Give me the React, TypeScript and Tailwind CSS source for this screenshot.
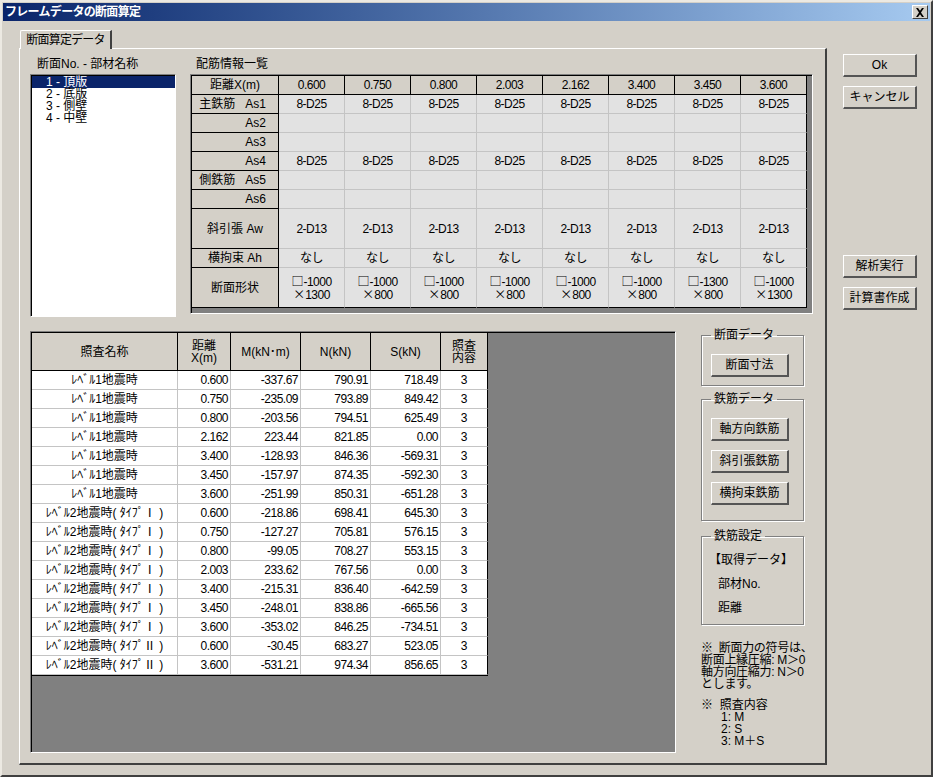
const FONT = "[font-family:'Liberation_Sans','Noto_Sans_CJK_JP',sans-serif]";

const dists = ["0.600", "0.750", "0.800", "2.003", "2.162", "3.400", "3.450", "3.600"];
const shapes = [
  ["1000", "1300"], ["1000", "800"], ["1000", "800"], ["1000", "800"],
  ["1000", "800"], ["1000", "800"], ["1300", "800"], ["1000", "1300"],
];

const L1 = "ﾚﾍﾞﾙ1地震時";
const L2 = "ﾚﾍﾞﾙ2地震時( ﾀｲﾌﾟⅠ )";
const L3 = "ﾚﾍﾞﾙ2地震時( ﾀｲﾌﾟⅡ )";
const rows = [
  [L1, "0.600", "-337.67", "790.91", "718.49"],
  [L1, "0.750", "-235.09", "793.89", "849.42"],
  [L1, "0.800", "-203.56", "794.51", "625.49"],
  [L1, "2.162", "223.44", "821.85", "0.00"],
  [L1, "3.400", "-128.93", "846.36", "-569.31"],
  [L1, "3.450", "-157.97", "874.35", "-592.30"],
  [L1, "3.600", "-251.99", "850.31", "-651.28"],
  [L2, "0.600", "-218.86", "698.41", "645.30"],
  [L2, "0.750", "-127.27", "705.81", "576.15"],
  [L2, "0.800", "-99.05", "708.27", "553.15"],
  [L2, "2.003", "233.62", "767.56", "0.00"],
  [L2, "3.400", "-215.31", "836.40", "-642.59"],
  [L2, "3.450", "-248.01", "838.86", "-665.56"],
  [L2, "3.600", "-353.02", "846.25", "-734.51"],
  [L3, "0.600", "-30.45", "683.27", "523.05"],
  [L3, "3.600", "-531.21", "974.34", "856.65"],
];

const SUNKEN = "border border-t-[#808080] border-l-[#808080] border-r-white border-b-white pt-[1px] pl-[1px] shadow-[inset_1px_1px_0_#000]";

function Btn({ label, w }: { label: string; w: string }) {
  return (
    <button className={`${w} h-[23px] flex items-center justify-center bg-[#d4d0c8] text-[12px] leading-none text-black font-normal border-t border-l border-t-white border-l-white border-r-2 border-b-2 border-r-[#555] border-b-[#555]`}>
      {label}
    </button>
  );
}

function Head({ children, className = "" }: { children: React.ReactNode; className?: string }) {
  return (
    <div className={`flex items-center bg-[#d4d0c8] border-r border-b border-black text-[12px] leading-[12px] whitespace-pre ${className}`}>
      {children}
    </div>
  );
}

function Cell({ children, last, bottom }: { children?: React.ReactNode; last?: boolean; bottom?: boolean }) {
  return (
    <div className={`flex items-center justify-center text-center bg-[#e2e2e2] border-r border-b ${last ? "border-r-black" : "border-r-[#c4c4c4]"} ${bottom ? "border-b-black" : "border-b-[#c4c4c4]"} text-[12px] leading-[12px] tracking-[-0.5px]`}>
      {children}
    </div>
  );
}

function DataRow({ title, justify = "justify-center", pr = "", bottom, value }: { title: string; justify?: string; pr?: string; bottom?: boolean; value: (i: number) => React.ReactNode }) {
  return (
    <>
      <Head className={`${justify} ${pr}`}>{title}</Head>
      {dists.map((_, i) => (
        <Cell key={i} last={i === 7} bottom={bottom}>{value(i)}</Cell>
      ))}
    </>
  );
}

function Group({ title, h, children }: { title: string; h: string; children: React.ReactNode }) {
  return (
    <fieldset className={`${h} w-[103px] border border-[#808080] shadow-[1px_1px_0_#fff,inset_1px_1px_0_#fff] px-[9px]`}>
      <legend className="px-[3px] text-[12px] leading-[12px]">{title}</legend>
      {children}
    </fieldset>
  );
}

export default function App() {
  return (
    <div className={`w-[933px] h-[777px] flex flex-col overflow-hidden bg-[#d4d0c8] text-black border-t-2 border-l-2 border-t-[#ece9e2] border-l-[#ece9e2] border-r-2 border-b-2 border-r-[#404040] border-b-[#404040] p-[1px] ${FONT}`}>
      <div className="h-[18px] shrink-0 flex items-center justify-between bg-gradient-to-r from-[#0a246a] to-[#a6caf0] pl-[2px] pr-[2px]">
        <span className="text-white font-bold text-[12px] tracking-[-0.7px] leading-none">フレームデータの断面算定</span>
        <span className="w-[16px] h-[14px] flex items-center justify-center bg-[#d4d0c8] border-t border-l border-t-white border-l-white border-r border-b border-r-[#404040] border-b-[#404040]">
          <svg width="10" height="9" viewBox="0 0 10 9"><path d="M1 0h2l2 2.7L7 0h2L6 4.5 9 9H7L5 6.3 3 9H1l3-4.5z" fill="#000" /></svg>
        </span>
      </div>

      <div className="flex flex-1 min-h-0 pl-[16px] pt-[9px]">
        <div className="w-[808px] shrink-0 flex flex-col">
          <div className="h-[18px] flex pl-[1px]">
            <div className="w-[92px] h-[19px] z-10 flex items-center justify-center bg-[#d4d0c8] rounded-tl-[2px] border-t border-l border-t-white border-l-white border-r-2 border-r-[#404040] text-[12px] tracking-[-0.8px] leading-none">
              断面算定データ
            </div>
          </div>
          <div className="h-[717px] border-t border-l border-t-white border-l-white border-r-2 border-b-2 border-r-[#404040] border-b-[#404040] pl-[10px]">
            <div className="flex pt-[8px] h-[282px]">
              <div className="w-[146px] shrink-0 flex flex-col">
                <div className="h-[17px] pl-[7px] text-[12px] leading-[14px]">断面No. - 部材名称</div>
                <div className={`h-[243px] bg-white ${SUNKEN} text-[12px] leading-[12px]`}>
                  {["1 - 頂版", "2 - 底版", "3 - 側壁", "4 - 中壁"].map((t, i) => (
                    <div key={t} className={`pl-[14px] ${i === 0 ? "bg-[#0a246a] text-white" : ""}`}>{t}</div>
                  ))}
                </div>
              </div>
              <div className="w-[623px] ml-[14px] flex flex-col">
                <div className="h-[17px] pl-[6px] text-[12px] leading-[14px]">配筋情報一覧</div>
                <div className={`h-[240px] bg-[#808080] ${SUNKEN}`}>
                  <div className="grid grid-cols-[87px_repeat(8,66px)] grid-rows-[19px_19px_19px_19px_19px_19px_19px_40px_19px_40px] w-fit">
                    <Head className="justify-center">距離X(m)</Head>
                    {dists.map((d) => (
                      <Head key={d} className="justify-center tracking-[-0.5px]">{d}</Head>
                    ))}
                    <DataRow title="主鉄筋   As1" justify="justify-end" pr="pr-[12px]" value={() => "8-D25"} />
                    <DataRow title="As2" justify="justify-end" pr="pr-[12px]" value={() => null} />
                    <DataRow title="As3" justify="justify-end" pr="pr-[12px]" value={() => null} />
                    <DataRow title="As4" justify="justify-end" pr="pr-[12px]" value={() => "8-D25"} />
                    <DataRow title="側鉄筋   As5" justify="justify-end" pr="pr-[12px]" value={() => null} />
                    <DataRow title="As6" justify="justify-end" pr="pr-[12px]" value={() => null} />
                    <DataRow title="斜引張 Aw" value={() => "2-D13"} />
                    <DataRow title="横拘束 Ah" value={() => "なし"} />
                    <DataRow
                      title="断面形状"
                      bottom
                      value={(i) => (
                        <span>
                          <span className="[font-family:'Noto_Sans_CJK_JP',sans-serif] tracking-normal">□</span>-{shapes[i][0]}
                          <br />
                          <span className="[font-family:'Noto_Sans_CJK_JP',sans-serif] tracking-normal">×</span>{shapes[i][1]}
                        </span>
                      )}
                    />
                  </div>
                </div>
              </div>
            </div>

            <div className="flex">
              <div className={`w-[646px] h-[422px] shrink-0 bg-[#808080] ${SUNKEN}`}>
                <div className="grid grid-cols-[146px_53px_70px_70px_70px_47px] grid-rows-[38px_repeat(16,19px)] w-fit border-b border-black bg-white">
                  <Head className="justify-center">照査名称</Head>
                  <Head className="justify-center text-center whitespace-normal">距離<br />X(m)</Head>
                  <Head className="justify-center">M(kN･m)</Head>
                  <Head className="justify-center">N(kN)</Head>
                  <Head className="justify-center">S(kN)</Head>
                  <Head className="justify-center text-center whitespace-normal">照査<br />内容</Head>
                  {rows.map((r, i) => (
                    <div key={i} className="contents">
                      <div className="flex items-center justify-center bg-white border-r border-b border-[#c4c4c4] text-[12px] leading-none">{r[0]}</div>
                      {r.slice(1).map((v, j) => (
                        <div key={j} className="flex items-center justify-end pr-[2px] bg-white border-r border-b border-[#c4c4c4] text-[12px] leading-none tracking-[-0.5px]">{v}</div>
                      ))}
                      <div className="flex items-center justify-center bg-white border-r border-r-black border-b border-b-[#c4c4c4] text-[12px] leading-none">3</div>
                    </div>
                  ))}
                </div>
              </div>

              <div className="ml-[25px] -mt-[2px] flex flex-col">
                <Group title="断面データ" h="h-[57px]">
                  <div className="mt-[13px]"><Btn label="断面寸法" w="w-[78px]" /></div>
                </Group>
                <Group title="鉄筋データ" h="h-[128px] mt-[7px]">
                  <div className="mt-[13px] flex flex-col gap-[9px]">
                    <Btn label="軸方向鉄筋" w="w-[78px]" />
                    <Btn label="斜引張鉄筋" w="w-[78px]" />
                    <Btn label="横拘束鉄筋" w="w-[78px]" />
                  </div>
                </Group>
                <Group title="鉄筋設定" h="h-[95px] mt-[9px]">
                  <div className="text-[12px] leading-[12px]">
                    <div className="mt-[12px] -ml-[2px]">【取得データ】</div>
                    <div className="mt-[12px] ml-[7px]">部材No.</div>
                    <div className="mt-[12px] ml-[7px]">距離</div>
                  </div>
                </Group>
                <div className="mt-[17px] text-[12px] leading-[12px] tracking-[-0.3px] whitespace-pre">
                  {"※  断面力の符号は、\n断面上縁圧縮: M＞0\n軸方向圧縮力: N＞0\nとします。"}
                </div>
                <div className="mt-[9px] text-[12px] leading-[12px] whitespace-pre">
                  {"※  照査内容\n      1: M\n      2: S\n      3: M＋S"}
                </div>
              </div>
            </div>
          </div>
        </div>

        <div className="ml-[16px] pt-[24px] flex flex-col">
          <Btn label="Ok" w="w-[74px]" />
          <div className="mt-[9px]"><Btn label="キャンセル" w="w-[74px]" /></div>
          <div className="mt-[146px]"><Btn label="解析実行" w="w-[74px]" /></div>
          <div className="mt-[9px]"><Btn label="計算書作成" w="w-[74px]" /></div>
        </div>
      </div>
    </div>
  );
}
